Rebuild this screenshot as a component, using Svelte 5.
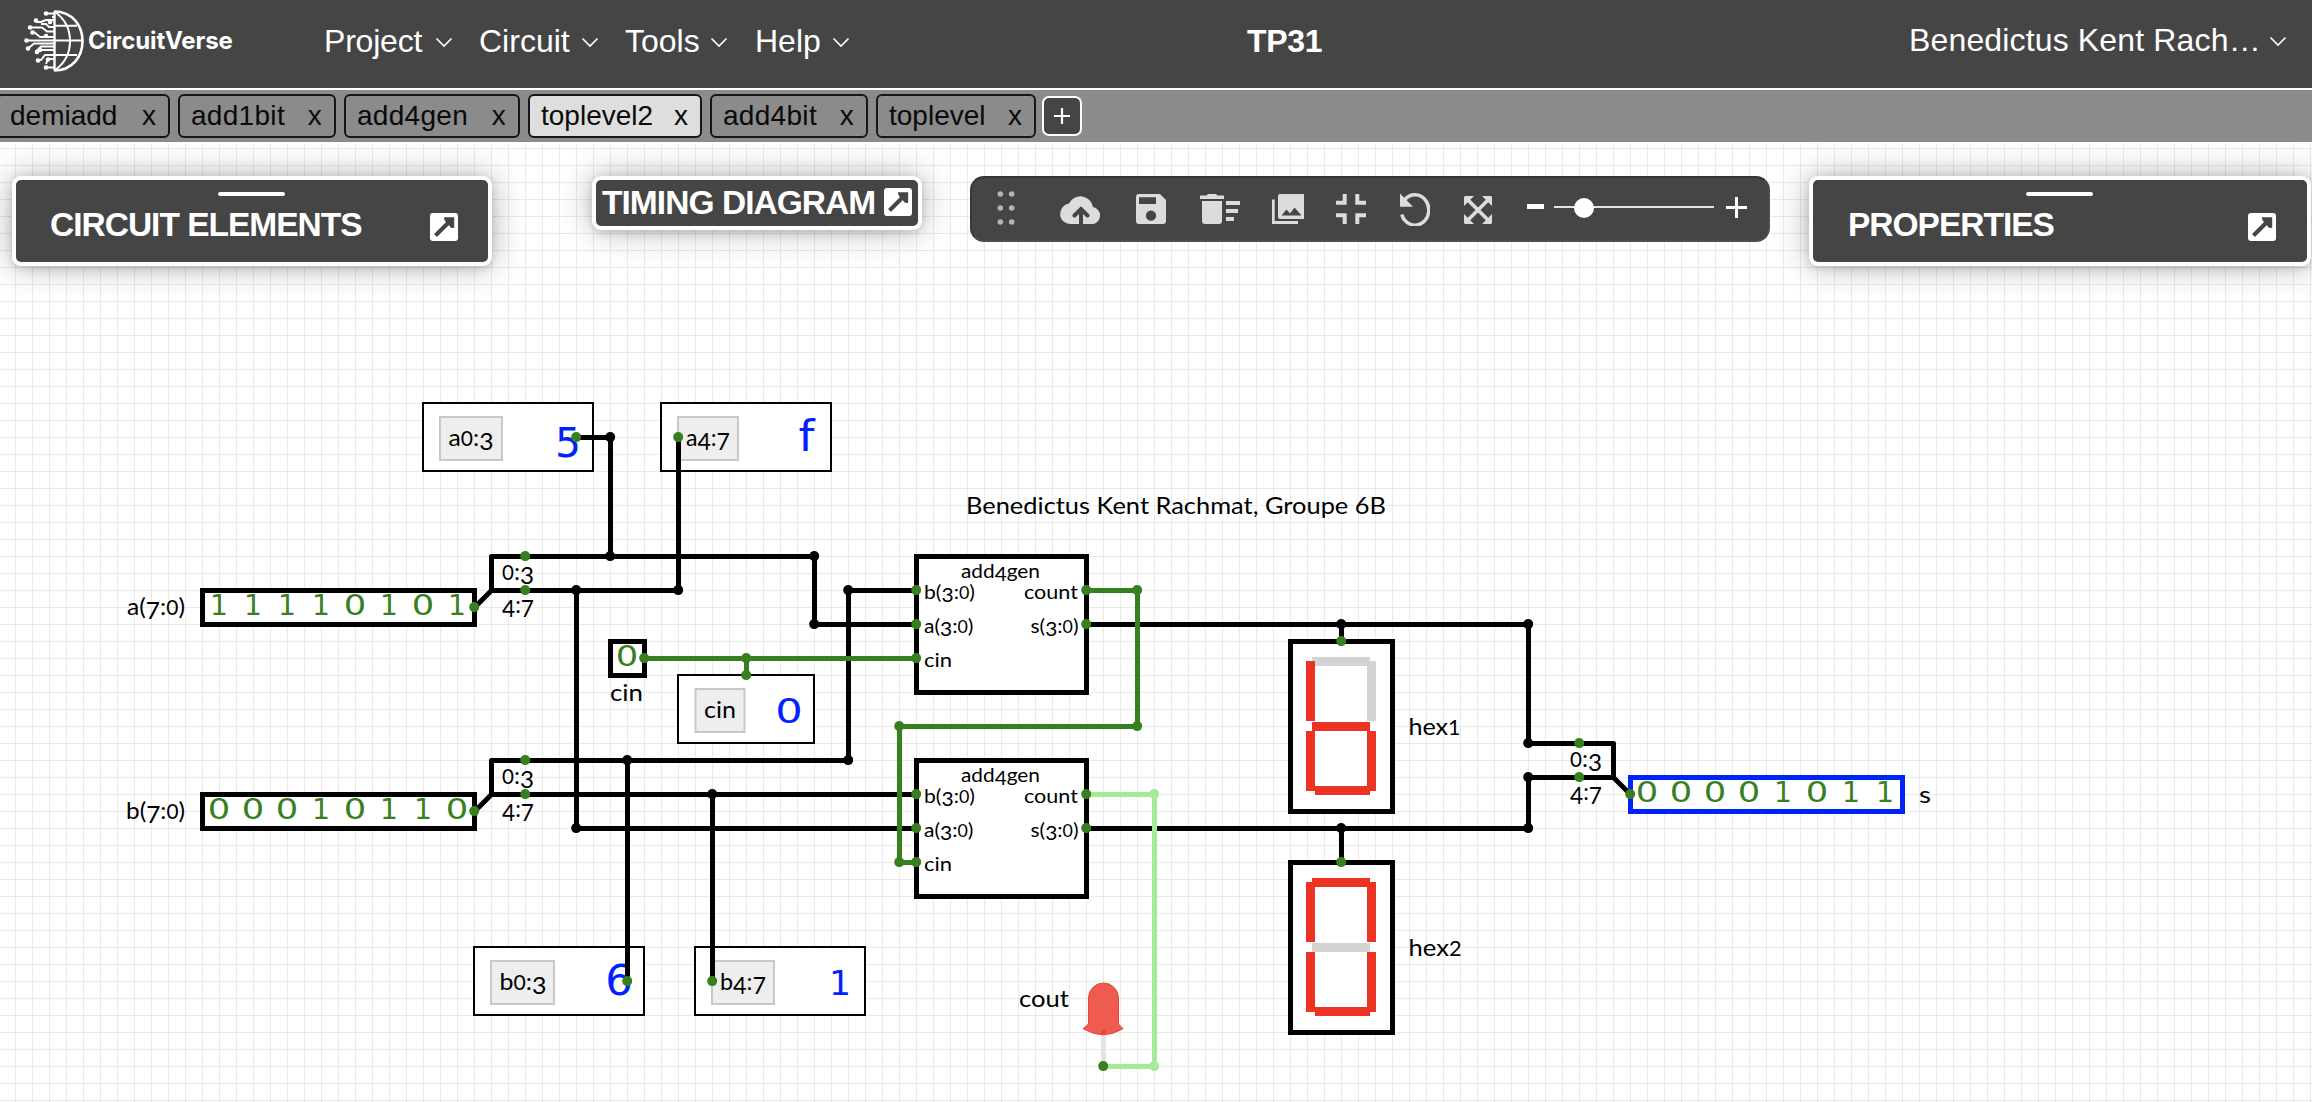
<script>
  const menus = [
    { label: 'Project', cls: 'm-project' },
    { label: 'Circuit', cls: 'm-circuit' },
    { label: 'Tools', cls: 'm-tools' },
    { label: 'Help', cls: 'm-help' }
  ];
  const tabs = [
    { name: 'demiadd', cls: 't-first' },
    { name: 'add1bit', cls: 't-short' },
    { name: 'add4gen', cls: 't-gen' },
    { name: 'toplevel2', cls: 't-active' },
    { name: 'add4bit', cls: 't-short' },
    { name: 'toplevel', cls: 't-top' }
  ];

  // Circuit coordinates are given in grid cells of 17px.
  const X = (k) => 15.5 + 17 * k;
  const Y = (j) => 148.5 + 17 * j;
  const path = (pts) => pts.map(([k, j], i) => `${i ? 'L' : 'M'}${X(k)} ${Y(j)}`).join('');

  const blackWires = [
    [[27, 27], [28, 26], [28, 24], [47, 24], [47, 28], [53, 28]],
    [[28, 26], [39, 26], [39, 17]],
    [[33, 17], [35, 17], [35, 24]],
    [[33, 26], [33, 40], [53, 40]],
    [[53, 26], [49, 26], [49, 36], [28, 36], [28, 38], [53, 38]],
    [[27, 39], [28, 38]],
    [[36, 36], [36, 49]],
    [[41, 38], [41, 49]],
    [[63, 28], [89, 28], [89, 35], [94, 35], [94, 37], [89, 37], [89, 40], [63, 40]],
    [[94, 37], [95, 38]],
    [[78, 28], [78, 29]],
    [[78, 40], [78, 42]]
  ].map(path);
  const greenWires = [
    [[37, 30], [53, 30]],
    [[43, 30], [43, 31]],
    [[63, 26], [66, 26], [66, 34], [52, 34], [52, 42], [53, 42]]
  ].map(path);
  const lightWire = path([[63, 38], [67, 38], [67, 54], [64, 54]]);

  const blackDots = [[35, 17], [35, 24], [39, 26], [33, 26], [47, 24], [47, 28], [49, 26], [49, 36], [33, 40],
    [36, 36], [41, 38], [78, 28], [89, 28], [89, 35], [89, 37], [89, 40], [78, 40]];
  const greenDots = [[33, 17], [39, 17], [30, 24], [30, 26], [27, 27], [37, 30], [43, 30], [43, 31], [30, 36], [30, 38],
    [27, 39], [36, 49], [41, 49], [53, 26], [53, 28], [53, 30], [63, 26], [63, 28], [66, 26], [66, 34], [52, 34],
    [52, 42], [53, 38], [53, 40], [53, 42], [63, 38], [63, 40], [78, 29], [78, 42], [92, 35], [92, 37], [95, 38], [64, 54]];
  const lightDots = [[67, 38], [67, 54]];

  const probes = [
    { k: 24, j: 15, w: 10, tx: 440, tw: 62, ty: 417, label: 'a0:3', lx: 448.5, lw: 45, v: '5', vx: 568, vy: 456.5, vs: 40, vw: 26 },
    { k: 38, j: 15, w: 10, tx: 678, tw: 60, ty: 417, label: 'a4:7', lx: 686, lw: 44, v: 'f', vx: 806.5, vy: 451, vs: 42, vw: 16 },
    { k: 39, j: 31, w: 8, tx: 695.5, tw: 49, ty: 689, label: 'cin', lx: 704, lw: 32, v: '0', vx: 789, vy: 722.6, vs: 34.5, vw: 27.5 },
    { k: 27, j: 47, w: 10, tx: 491, tw: 63, ty: 961, label: 'b0:3', lx: 499.5, lw: 47, v: '6', vx: 619, vy: 995.4, vs: 42, vw: 27.5 },
    { k: 40, j: 47, w: 10, tx: 712, tw: 62, ty: 961, label: 'b4:7', lx: 720, lw: 46, v: '1', vx: 840, vy: 995, vs: 34.5, vw: 22 }
  ];
  const bitRows = [
    { bits: '11110101', k: 12, j: 27 },
    { bits: '00010110', k: 12, j: 39 },
    { bits: '00001011', k: 96, j: 38 },
    { bits: '0', k: 36, j: 30 }
  ];
  const labels = [
    { t: 'a(7:0)', x: 127, y: 615, w: 58, s: 24 },
    { t: 'b(7:0)', x: 126, y: 819, w: 59, s: 24 },
    { t: '0:3', x: 502, y: 580, w: 32, s: 24 },
    { t: '4:7', x: 502, y: 613, w: 32, s: 24 },
    { t: '0:3', x: 502, y: 784, w: 32, s: 24 },
    { t: '4:7', x: 502, y: 817, w: 32, s: 24 },
    { t: '0:3', x: 1570, y: 767, w: 32, s: 24 },
    { t: '4:7', x: 1570, y: 800, w: 32, s: 24 },
    { t: 'cin', x: 610, y: 701, w: 33, s: 24 },
    { t: 'hex1', x: 1408.5, y: 735, w: 52, s: 24 },
    { t: 'hex2', x: 1408.5, y: 956, w: 53, s: 24 },
    { t: 's', x: 1919, y: 802.5, w: 12, s: 24 },
    { t: 'cout', x: 1019, y: 1006.5, w: 50, s: 24 },
    { t: 'Benedictus Kent Rachmat, Groupe 6B', x: 966, y: 513.5, w: 420, s: 24 }
  ];
  for (const p of probes) labels.push({ t: p.label, x: p.lx, y: p.ty + 29, w: p.lw, s: 24 });
  for (const dy of [0, 204]) {
    labels.push(
      { t: 'add4gen', x: 961, y: 577.5 + dy, w: 79, s: 19.5 },
      { t: 'b(3:0)', x: 924, y: 598.5 + dy, w: 51, s: 19.5 },
      { t: 'a(3:0)', x: 924, y: 632.5 + dy, w: 49.5, s: 19.5 },
      { t: 'cin', x: 924, y: 666.5 + dy, w: 28, s: 19.5 },
      { t: 'count', x: 1024, y: 598.5 + dy, w: 54, s: 19.5 },
      { t: 's(3:0)', x: 1030.5, y: 632.5 + dy, w: 48, s: 19.5 }
    );
  }

  // Old-style figures: 0, 1 and 2 sit near x-height, 3, 4, 5, 7 and 9 drop below the baseline.
  function figures(text, size) {
    let at = 0;
    return [...text].map((c) => {
      const low = '34579'.includes(c);
      const want = low ? size * 0.16 : 0;
      const dy = want - at;
      at = want;
      return { c, dy, size: '012'.includes(c) ? size * 0.85 : size };
    });
  }

  const displays = [
    { y: 0, j: 29, on: [0, 1, 0, 1, 1, 1, 1] },
    { y: 221, j: 42, on: [1, 1, 1, 0, 1, 1, 1] }
  ];
  const segments = [
    [1312, 657, 58, 9],
    [1306, 661, 9, 60],
    [1367, 661, 9, 60],
    [1312, 722, 58, 9],
    [1306, 731, 9, 60],
    [1367, 731, 9, 60],
    [1315, 786, 55, 9]
  ];
</script>

{#snippet caret()}
  <svg class="caret" width="18" height="12" viewBox="0 0 18 12"><path d="M1.5 1.5 9 9l7.5-7.5" /></svg>
{/snippet}

{#snippet popout()}
  <svg class="popout" width="28" height="28" viewBox="0 0 28 28">
    <rect width="28" height="28" rx="3" fill="#fff" />
    <path d="M5.5 22.5 20 8" stroke="#454545" stroke-width="4" />
    <path d="M13.8 4.3h10.4v10.5l-3 .3-6.5-7.5z" fill="#454545" />
  </svg>
{/snippet}

<div class="app">
  <header>
    <div class="brand">
      <svg width="60" height="62" viewBox="0 0 60 62">
        <g fill="none" stroke="#fff" stroke-width="2">
          <path d="M30.5 1.5v59" stroke-width="2.4" />
          <path d="M30 1.5c38 0 38 59 0 59" stroke-width="2.6" />
          <path d="M31 2c20 14 20 44 0 58M31 15.700h22M31 30.500h28M31 45h22" />
          <path d="M31 3.500h-8M31 10h-9l-5 2h-5M31 17h-6l-3-3h-5M31 21.500h-8l-5-4H6M31 27H16l-6-5M31 30.500H2M31 33.500H10l-6 5M31 36.500H17l-5 5M31 40H16M31 45h-10l-4 5h-3M31 49h-7l-2 5M31 57.500h-8M31 7h-3" />
        </g>
        <g fill="#fff">
          {#each [[22, 3.500], [12, 10.500], [6, 17.500], [2.500, 30.500], [8.500, 22.500], [4, 38.500], [13, 42], [14, 50.500], [22, 57.500], [24, 49.500], [26, 12], [22, 26], [16, 40]] as [x, y]}
            <circle cx={x} cy={y} r="2.300" />
          {/each}
        </g>
      </svg>
      <span>CircuitVerse</span>
    </div>
    <nav>
      {#each menus as m}
        <a class={m.cls}><span>{m.label}</span>{@render caret()}</a>
      {/each}
    </nav>
    <h1>TP31</h1>
    <div class="user"><span>Benedictus Kent Rach…</span>{@render caret()}</div>
  </header>

  <div class="tabs">
    {#each tabs as t}
      <div class="tab {t.cls}"><span>{t.name}</span><span>x</span></div>
    {/each}
    <button class="add">
      <svg width="18" height="18" viewBox="0 0 18 18"><path d="M9 1v16M1 9h16" /></svg>
    </button>
  </div>

  <main>
    <svg class="canvas" width="2312" height="960" viewBox="0 142 2312 960">
      <defs>
        <pattern id="grid" width="17" height="17" patternUnits="userSpaceOnUse" x="15" y="148">
          <path d="M0 .5h17M.5 0v17" stroke="#eaeaea" stroke-width="1" fill="none" />
        </pattern>
      </defs>
      <rect x="0" y="144" width="2312" height="958" fill="url(#grid)" />

      <g fill="#fff" stroke="#000" stroke-width="5">
        <rect x={X(11)} y={Y(26)} width="272" height="34" />
        <rect x={X(11)} y={Y(38)} width="272" height="34" />
        <rect x={X(35)} y={Y(29)} width="34" height="34" />
        <rect x={X(95)} y={Y(37)} width="272" height="34" stroke="#0022fb" />
        <rect x={X(53)} y={Y(24)} width="170" height="136" />
        <rect x={X(53)} y={Y(36)} width="170" height="136" />
        {#each displays as d}
          <rect x={X(75)} y={Y(d.j)} width="102" height="170" />
        {/each}
      </g>
      {#each probes as p}
        <rect x={X(p.k) - 0.5} y={Y(p.j) - 0.5} width={p.w * 17} height="68" fill="#fff" stroke="#000" stroke-width="2" />
        <rect x={p.tx} y={p.ty} width={p.tw} height="43" fill="#eee" stroke="#c8c8c8" stroke-width="2" />
        <text class="value" x={p.vx} y={p.vy} font-size={p.vs} textLength={p.vw} lengthAdjust="spacingAndGlyphs">{p.v}</text>
      {/each}

      {#each displays as d}
        {#each segments as [x, y, w, h], i}
          <rect {x} y={y + d.y} width={w} height={h} fill={d.on[i] ? '#ed3324' : '#d3d3d3'} />
        {/each}
      {/each}

      <path d="M1103.500 1030v36" stroke="#e3e4e5" stroke-width="5" />
      <path
        d="M1088.500 1024V998a15 15 0 0 1 30 0v26l4.500 4.700q-19.500 12-40 0z"
        fill="#f05b4f" stroke="#e5483d" stroke-width="1"
      />
      <circle cx="1103.500" cy="1032.500" r="2.700" fill="#ea4438" />

      <g fill="none" stroke-width="5" stroke-linejoin="round">
        {#each blackWires as d}<path {d} stroke="#000" />{/each}
        {#each greenWires as d}<path {d} stroke="#38801f" />{/each}
        <path d={lightWire} stroke="#a6ea97" />
      </g>
      {#each blackDots as [k, j]}<circle cx={X(k) - 0.3} cy={Y(j) - 0.4} r="5" />{/each}
      {#each lightDots as [k, j]}<circle cx={X(k) - 0.3} cy={Y(j) - 0.4} r="5" fill="#a6ea97" />{/each}
      {#each greenDots as [k, j]}<circle cx={X(k) - 0.3} cy={Y(j) - 0.4} r="5" fill="#38801f" />{/each}

      {#each bitRows as r}
        {#each r.bits as b, i}
          <text
            class="bit" x={X(r.k + 2 * i) - 0.5} y={Y(r.j) + 7.8}
            textLength={b === '0' ? 22.5 : 18} lengthAdjust="spacingAndGlyphs">{b}</text>
        {/each}
      {/each}
      {#each labels as l}
        <text class="label" x={l.x} y={l.y} font-size={l.s} textLength={l.w} lengthAdjust="spacingAndGlyphs"
          >{#each figures(l.t, l.s) as f}<tspan dy={f.dy} font-size={f.size}>{f.c}</tspan>{/each}</text>
      {/each}
    </svg>

    <div class="overlay">
      <section class="panel elements">
        <i class="handle"></i>
        <div class="title"><h2>CIRCUIT ELEMENTS</h2>{@render popout()}</div>
      </section>
      <section class="panel timing"><h2>TIMING DIAGRAM</h2>{@render popout()}</section>
      <section class="toolbar">
        <svg class="dots" width="18" height="34" viewBox="0 0 18 34" fill="#b5b5b5">
          {#each [3, 17, 31] as y}<circle cx="3.300" cy={y} r="2.800" /><circle cx="14.700" cy={y} r="2.800" />{/each}
        </svg>
        <svg class="cloud" width="42" height="30" viewBox="0 0 42 30">
          <path d="M10 30A10 10 0 0 1 1.500 15 10 10 0 0 1 9 9.500 12.700 12.700 0 0 1 33 13 8.700 8.700 0 0 1 33.500 30z" fill="#dcdcdc" />
          <path d="M21 30V15M14.500 21.500 21 15l6.500 6.500" fill="none" stroke="#454545" stroke-width="4" stroke-linecap="round" />
        </svg>
        <svg class="save" width="30" height="30" viewBox="0 0 30 30">
          <path fill-rule="evenodd" fill="#dcdcdc" d="M3 0h21l6 6v21a3 3 0 0 1-3 3H3a3 3 0 0 1-3-3V3a3 3 0 0 1 3-3zM3 3.300V10h17V3.300zM15 16.500a5 5 0 1 0 0 10.300 5 5 0 0 0 0-10.300z" />
        </svg>
        <svg class="trash" width="40" height="30" viewBox="0 0 40 30" fill="#dcdcdc">
          <path d="M0 1.500h6.500L8 0h8l1.500 1.500H24V5H0zM2 7h20v20a3 3 0 0 1-3 3H5a3 3 0 0 1-3-3zM26 7h14v4H26zM26 15h12v4H26zM26 23h8v4h-8z" />
        </svg>
        <svg class="images" width="32" height="30" viewBox="0 0 32 30">
          <path fill="#dcdcdc" d="M0 5.500h2.700V27H26v3H0zM8 0h24v25H8a2 2 0 0 1-2-2V2a2 2 0 0 1 2-2z" />
          <path fill="#454545" d="m9.500 21.500 5-6 3.500 4 4.500-6 7 8z" />
        </svg>
        <svg class="compress" width="30" height="30" viewBox="0 0 30 30">
          <path d="M8.700 0v8.700H0M21.300 0v8.700H30M8.700 30v-8.700H0M21.300 30v-8.700H30" fill="none" stroke="#dcdcdc" stroke-width="4" />
        </svg>
        <svg class="undo" width="30" height="34" viewBox="0 0 30 34">
          <path d="M4.500 8A13.800 15.200 0 1 1 1.800 22.500" fill="none" stroke="#dcdcdc" stroke-width="3.500" />
          <path d="M0 1.500 13 14.800H0z" fill="#dcdcdc" />
        </svg>
        <svg class="expand" width="28" height="28" viewBox="0 0 28 28">
          <path d="m4 4 20 20M24 4 4 24" stroke="#dcdcdc" stroke-width="3.700" />
          <path d="M1 0h9L0 10V1zM27 0h-9l10 10V1zM1 28h9L0 18v9zM27 28h-9l10-10v9z" fill="#dcdcdc" />
        </svg>
        <i class="minus"></i>
        <div class="track"><i class="knob"></i></div>
        <svg class="plus" width="21" height="21" viewBox="0 0 21 21"><path d="M10.500 0v21M0 10.500h21" stroke="#fff" stroke-width="3" /></svg>
      </section>
      <section class="panel properties">
        <i class="handle"></i>
        <div class="title"><h2>PROPERTIES</h2>{@render popout()}</div>
      </section>
    </div>
  </main>
</div>

<style>
  :global(body) { margin: 0; background: #fff; }
  .app {
    width: 2312px;
    height: 1102px;
    overflow: hidden;
    display: flex;
    flex-direction: column;
    font-family: 'Liberation Sans', Arial, sans-serif;
  }
  header {
    box-sizing: border-box;
    height: 90px;
    flex: none;
    display: flex;
    align-items: center;
    background: #454545;
    border-bottom: 2px solid #fff;
    color: #fff;
    padding-bottom: 6px;
  }
  h1, h2 { margin: 0; font-weight: 700; }
  .brand { display: flex; align-items: center; width: 324px; padding-left: 24px; box-sizing: border-box; }
  .brand span { font: 700 24px/1 'Inter', sans-serif; letter-spacing: -0.1px; margin-left: 4px; }
  nav { display: flex; width: 923px; }
  nav a, .user { display: flex; align-items: center; font-size: 32px; line-height: 40px; white-space: nowrap; }
  .m-project { width: 155px; }
  .m-circuit { width: 146px; }
  .m-tools { width: 130px; }
  .m-help { width: 120px; }
  .m-project span { width: 111px; letter-spacing: -0.2px; }
  .m-circuit span { width: 102px; }
  .m-tools span { width: 85px; }
  .m-help span { width: 77px; }
  h1 { font-size: 32px; line-height: 40px; width: 662px; letter-spacing: -0.3px; }
  .user span { width: 360px; letter-spacing: 0.15px; }
  .user { padding-bottom: 3px; }
  .caret { flex: none; margin-top: 4px; }
  .caret path { fill: none; stroke: #fff; stroke-width: 1.6; }

  .tabs {
    box-sizing: border-box;
    height: 52px;
    flex: none;
    background: #8b8b8b;
    display: flex;
    padding: 4px 0 0;
    gap: 8px;
    font-size: 28px;
  }
  .tab {
    box-sizing: border-box;
    height: 44px;
    border: 2px solid #161616;
    border-radius: 6px;
    display: flex;
    align-items: center;
    justify-content: space-between;
    padding: 0 12px;
    line-height: 40px;
    flex: none;
    color: #0a0a0a;
  }
  .t-first { width: 174px; margin-left: -4px; }
  .t-short { width: 158px; }
  .t-short span { letter-spacing: 0.3px; }
  .t-gen { width: 176px; }
  .t-gen span { letter-spacing: 0.3px; }
  .t-active { width: 174px; background: #dedede; }
  .t-active, .t-short, .t-gen, .t-top { padding-left: 11px; }
  .t-top { width: 160px; }
  .add {
    box-sizing: border-box;
    width: 40px;
    height: 40px;
    margin: 2px 0 0 -2px;
    padding: 0;
    border: 2px solid #fff;
    border-radius: 7px;
    background: #454545;
    display: grid;
    place-items: center;
  }
  .add path { stroke: #fff; stroke-width: 2.2; fill: none; }

  main { display: grid; flex: 1; }
  .canvas, .overlay { grid-area: 1 / 1; }
  .canvas { display: block; }
  .overlay { display: flex; align-items: flex-start; padding: 34px 0 0 12px; }
  .label { font-family: Lato, sans-serif; fill: #000; }
  .bit, .value { font-family: 'DejaVu Sans', sans-serif; text-anchor: middle; }
  .bit { fill: #38801f; font-size: 27.5px; }
  .value { fill: #0022fb; }

  .panel {
    box-sizing: border-box;
    flex: none;
    background: #454545;
    border: 4px solid #fff;
    border-radius: 9px;
    box-shadow: 0 0 34px rgba(0, 0, 0, 0.3), 0 2px 8px rgba(0, 0, 0, 0.15);
    color: #fff;
    display: flex;
  }
  .panel h2 { font-size: 33.5px; line-height: 36px; white-space: nowrap; }
  .elements, .properties { height: 90px; flex-direction: column; }
  .elements { width: 480px; }
  .timing { width: 330px; height: 54px; margin-left: 100px; align-items: center; justify-content: space-between; padding: 0 6px; }
  .timing h2 { letter-spacing: -0.95px; }
  .properties { width: 502px; margin-left: 39px; }
  .handle { width: 67px; height: 4px; border-radius: 2px; background: #fff; margin: 12px 0 0 202px; }
  .properties .handle { margin-left: 213px; }
  .title { display: flex; justify-content: space-between; align-items: center; padding: 11px 30px 0 34px; }
  .title h2 { letter-spacing: -1px; }
  .properties .title { padding-left: 35px; padding-right: 31px; }
  .popout { flex: none; margin-top: 3px; }
  .timing .popout { margin: -2px 0 0; }

  .toolbar {
    box-sizing: border-box;
    width: 800px;
    height: 66px;
    flex: none;
    margin-left: 48px;
    background: #454545;
    border: 2px solid #4c4c4c;
    border-top-color: #343434;
    border-left-color: #3a3a3a;
    border-radius: 14px;
    display: flex;
    align-items: center;
    padding-left: 25px;
  }
  .toolbar > * { flex: none; }
  .dots { margin: -2px 45px 0 0; }
  .cloud, .save { margin-right: 34px; }
  .trash, .images { margin-right: 32px; }
  .compress { margin-right: 34px; }
  .undo { margin-right: 34px; }
  .expand { margin: 2px 35px 0 0; }
  .minus { width: 17px; height: 5px; background: #fff; margin: -5px 10px 0 0; }
  .track { width: 160px; height: 2px; background: #dfe3e8; margin: -4px 12px 0 0; display: flex; align-items: center; }
  .knob { width: 20px; height: 20px; border-radius: 50%; background: #fff; margin: 2px 0 0 20px; }
  .plus { margin-top: -3px; }
</style>
